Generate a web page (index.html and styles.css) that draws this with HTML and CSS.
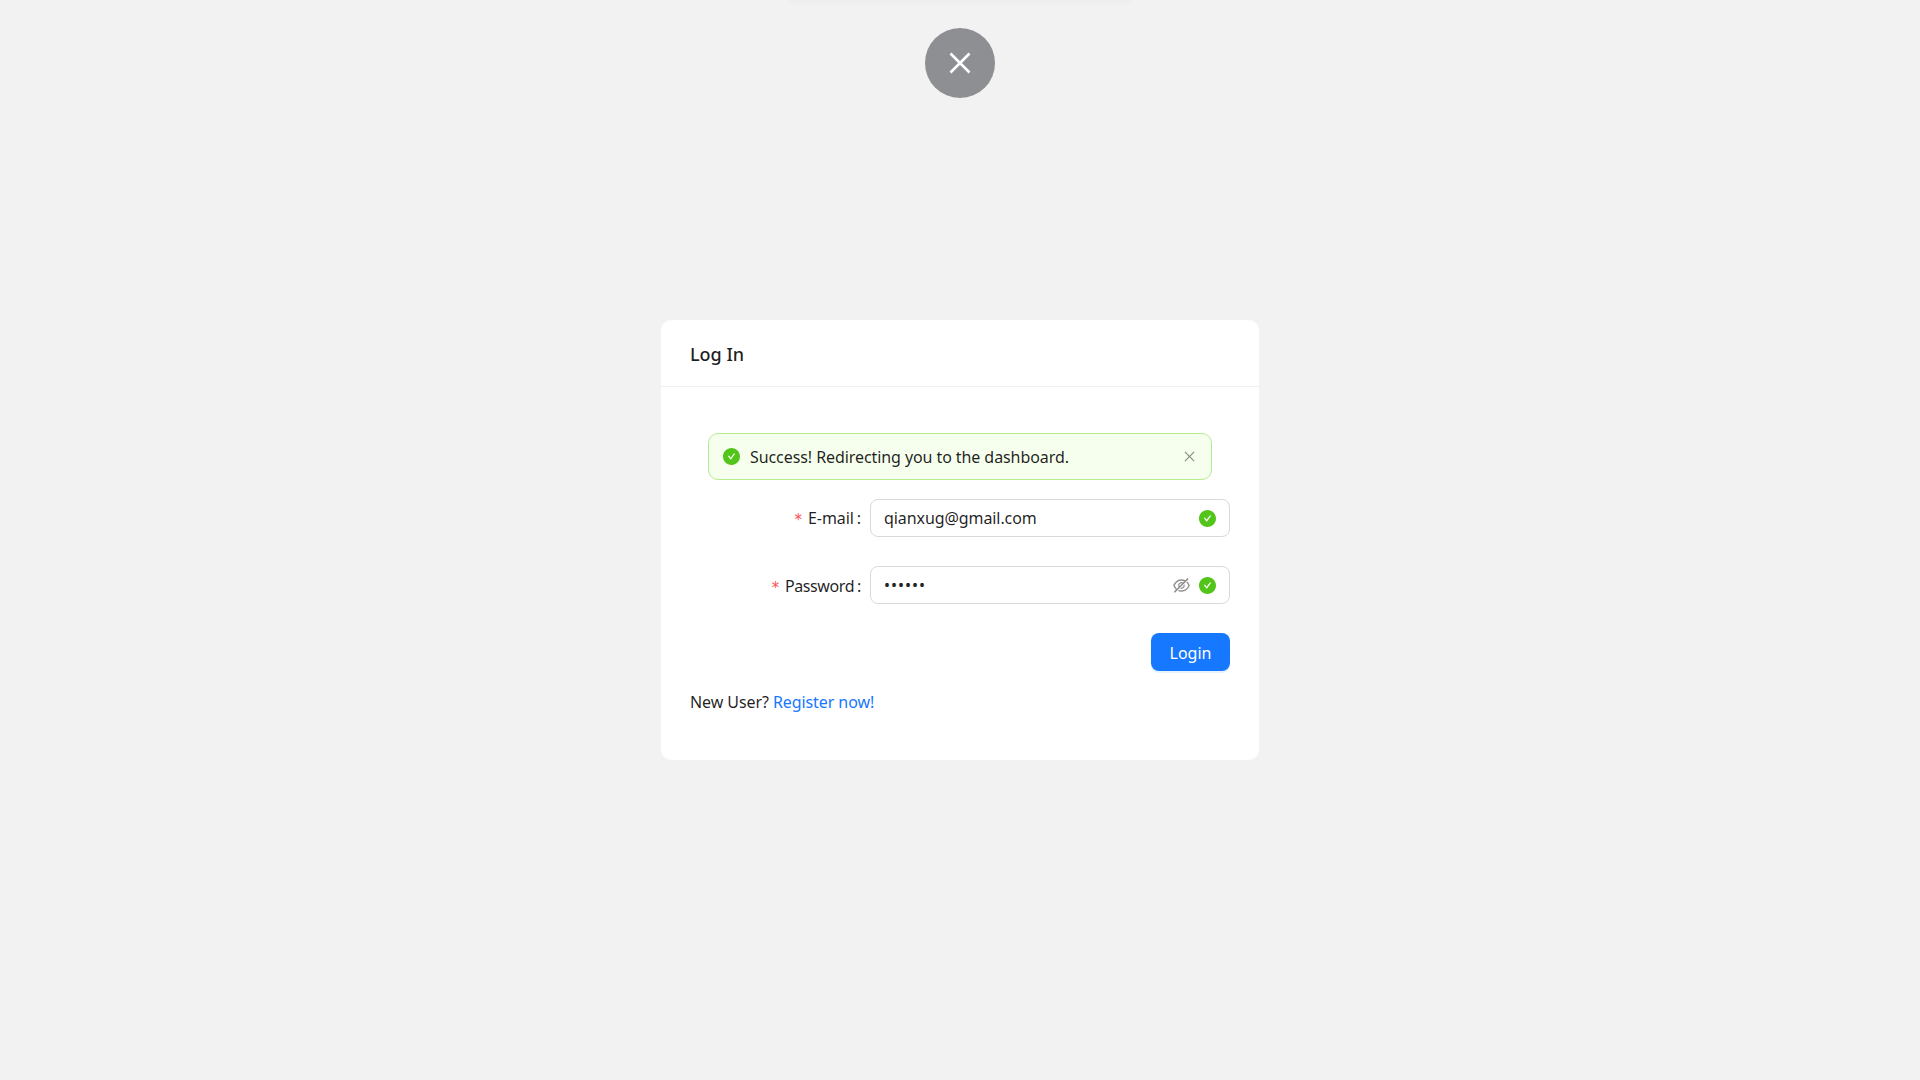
FILE: index.html
```html
<!DOCTYPE html>
<html lang="en">
<head>
  <meta charset="UTF-8">
  <meta name="viewport" content="width=device-width, initial-scale=1.0">
  <title>Log In</title>
  <link rel="stylesheet" href="styles.css">
</head>
<body>
  <div class="top-glow"></div>
  <button type="button" class="close-btn" aria-label="Close">
    <svg viewBox="0 0 24 24" width="24" height="24"><path d="M2.5 2.5l19 19M21.5 2.5l-19 19"/></svg>
  </button>

  <main class="card">
    <div class="card-head">Log In</div>
    <div class="card-body">
      <div class="alert">
        <svg class="icon-check" viewBox="64 64 896 896" width="17" height="17"><path d="M512 64C264.6 64 64 264.6 64 512s200.6 448 448 448 448-200.6 448-448S759.4 64 512 64zm193.5 301.7l-210.6 292a31.8 31.8 0 01-51.7 0L318.5 484.9c-3.8-5.3 0-12.7 6.5-12.7h46.9c10.2 0 19.9 4.9 25.9 13.3l71.2 98.8 157.2-218c6-8.3 15.6-13.3 25.9-13.3H699c6.5 0 10.3 7.4 6.5 12.7z"/></svg>
        <span class="alert-text">Success! Redirecting you to the dashboard.</span>
        <svg class="icon-x" viewBox="64 64 896 896" width="13" height="13"><path d="M799.86 166.31c.02 0 .04.02.08.06l57.69 57.7c.04.03.05.05.06.08a.12.12 0 010 .06c0 .03-.02.05-.06.09L569.93 512l287.7 287.7c.04.04.05.06.06.09a.12.12 0 010 .07c0 .02-.02.04-.06.08l-57.7 57.69c-.03.04-.05.05-.07.06a.12.12 0 01-.07 0c-.03 0-.05-.02-.09-.06L512 569.93l-287.7 287.7c-.04.04-.06.05-.09.06a.12.12 0 01-.07 0c-.02 0-.04-.02-.08-.06l-57.69-57.7c-.04-.03-.05-.05-.06-.07a.12.12 0 010-.07c0-.03.02-.05.06-.09L454.07 512l-287.7-287.7c-.04-.04-.05-.06-.06-.09a.12.12 0 010-.07c0-.02.02-.04.06-.08l57.7-57.69c.03-.04.05-.05.07-.06a.12.12 0 01.07 0c.03 0 .05.02.09.06L512 454.07l287.7-287.7c.04-.04.06-.05.09-.06a.12.12 0 01.07 0z"/></svg>
      </div>

      <form class="login-form">
        <div class="form-row">
          <label class="form-label"><span class="req">*</span>E-mail<span class="colon">:</span></label>
          <div class="input-box">
            <span class="input-value">qianxug@gmail.com</span>
            <svg class="icon-check" viewBox="64 64 896 896" width="17" height="17"><path d="M512 64C264.6 64 64 264.6 64 512s200.6 448 448 448 448-200.6 448-448S759.4 64 512 64zm193.5 301.7l-210.6 292a31.8 31.8 0 01-51.7 0L318.5 484.9c-3.8-5.3 0-12.7 6.5-12.7h46.9c10.2 0 19.9 4.9 25.9 13.3l71.2 98.8 157.2-218c6-8.3 15.6-13.3 25.9-13.3H699c6.5 0 10.3 7.4 6.5 12.7z"/></svg>
          </div>
        </div>
        <div class="form-row">
          <label class="form-label label-tight"><span class="req">*</span>Password<span class="colon">:</span></label>
          <div class="input-box">
            <span class="input-value dots">••••••</span>
            <svg class="icon-eye" viewBox="64 64 896 896" width="17" height="17"><path d="M942.2 486.2Q889.47 375.11 816.7 305l-50.88 50.88C807.31 395.53 843.45 447.4 874.7 512 791.5 684.2 673.4 766 512 766q-72.67 0-133.87-22.38L323 798.75Q408 838 512 838q288.3 0 430.2-300.3a60.29 60.29 0 000-51.5zm-63.57-320.64L836 122.88a8 8 0 00-11.32 0L715.31 232.2Q624.86 186 512 186q-288.3 0-430.2 300.3a60.3 60.3 0 000 51.5q56.69 119.4 136.5 191.41L112.48 835a8 8 0 000 11.31L155.17 889a8 8 0 0011.31 0l712.15-712.12a8 8 0 000-11.32zM149.3 512C232.6 339.8 350.7 258 512 258c54.54 0 104.13 9.36 149.12 28.39l-70.3 70.3a176 176 0 00-238.13 238.13l-83.42 83.42C223.1 637.49 183.3 582.28 149.3 512zm246.7 0a112.11 112.11 0 01146.2-106.69L401.31 546.2A112 112 0 01396 512z"/><path d="M508 624c-3.46 0-6.87-.16-10.25-.47l-52.82 52.82a176.09 176.09 0 00227.42-227.42l-52.82 52.82c.31 3.38.47 6.79.47 10.25a111.94 111.94 0 01-112 112z"/></svg>
            <svg class="icon-check" viewBox="64 64 896 896" width="17" height="17"><path d="M512 64C264.6 64 64 264.6 64 512s200.6 448 448 448 448-200.6 448-448S759.4 64 512 64zm193.5 301.7l-210.6 292a31.8 31.8 0 01-51.7 0L318.5 484.9c-3.8-5.3 0-12.7 6.5-12.7h46.9c10.2 0 19.9 4.9 25.9 13.3l71.2 98.8 157.2-218c6-8.3 15.6-13.3 25.9-13.3H699c6.5 0 10.3 7.4 6.5 12.7z"/></svg>
          </div>
        </div>
        <div class="form-actions">
          <button type="button" class="login-btn">Login</button>
        </div>
      </form>

      <p class="register">New User? <a href="#">Register now!</a></p>
    </div>
  </main>
</body>
</html>
```

FILE: styles.css
```css
* {
  box-sizing: border-box;
}
body {
  margin: 0;
  height: 100vh;
  display: flex;
  align-items: center;
  justify-content: center;
  background-color: #f2f2f2;
  color: rgba(0,0,0,0.88);
  font-family: "Noto Sans", "Noto Sans CJK SC", sans-serif;
  font-size: 16px;
  line-height: 24px;
  letter-spacing: -0.08px;
  overflow: hidden;
}
svg {
  display: block;
  fill: currentColor;
  flex: none;
}
.top-glow {
  position: absolute;
  top: -8px;
  left: 790px;
  width: 340px;
  height: 8px;
  box-shadow: 0 0 10px rgba(0,0,0,0.05);
}
.close-btn {
  position: absolute;
  top: 28px;
  left: 925px;
  width: 70px;
  height: 70px;
  display: flex;
  align-items: center;
  justify-content: center;
  padding: 0;
  border: none;
  border-radius: 50%;
  background-color: #8e8f92;
  color: #fff;
  cursor: pointer;
}
.close-btn svg {
  fill: none;
  stroke: #fff;
  stroke-width: 2.6;
}
.card {
  width: 598px;
  height: 440px;
  background: #fff;
  border-radius: 10px;
}
.card-head {
  height: 67px;
  display: flex;
  align-items: center;
  padding: 1px 29px 0;
  border-bottom: 1px solid #f0f0f0;
  font-size: 18px;
  font-weight: 500;
  letter-spacing: 0;
}
.card-body {
  padding: 46px 29px 0;
}
.alert {
  height: 47px;
  margin: 0 18px 19px;
  display: flex;
  align-items: center;
  padding: 0 15px 0 14px;
  background: #f6ffed;
  border: 1px solid #b7eb8f;
  border-radius: 10px;
}
.alert-text {
  flex: 1;
  margin-left: 10px;
}
.icon-check {
  color: #52c41a;
}
.icon-x {
  color: rgba(0,0,0,0.45);
}
.icon-eye {
  color: rgba(0,0,0,0.45);
  margin-right: 9px;
}
.form-row {
  display: flex;
  margin-bottom: 29px;
}
.form-label {
  width: 180px;
  height: 38px;
  display: flex;
  align-items: center;
  justify-content: flex-end;
}
.label-tight {
  letter-spacing: -0.4px;
  padding-top: 1px;
}
.req {
  color: #ff4d4f;
  font-family: "DejaVu Sans", sans-serif;
  font-size: 15px;
  margin: 4px 6px 0 0;
}
.colon {
  margin: 0 9px 0 3px;
}
.input-box {
  width: 360px;
  height: 38px;
  display: flex;
  align-items: center;
  padding: 0 13px;
  background: #fff;
  border: 1px solid #d9d9d9;
  border-radius: 8px;
}
.input-value {
  flex: 1;
}
.dots {
  color: #222;
  letter-spacing: 1px;
}
.form-actions {
  display: flex;
  justify-content: flex-end;
  margin-bottom: 19px;
}
.login-btn {
  width: 79px;
  height: 38px;
  padding: 2px 0 0;
  border: none;
  border-radius: 8px;
  background-color: #1677ff;
  color: #fff;
  font: inherit;
  box-shadow: 0 2px 0 rgba(5,145,255,0.1);
  cursor: pointer;
}
.register {
  margin: 0;
}
.register a {
  color: #1677ff;
  text-decoration: none;
}
```
